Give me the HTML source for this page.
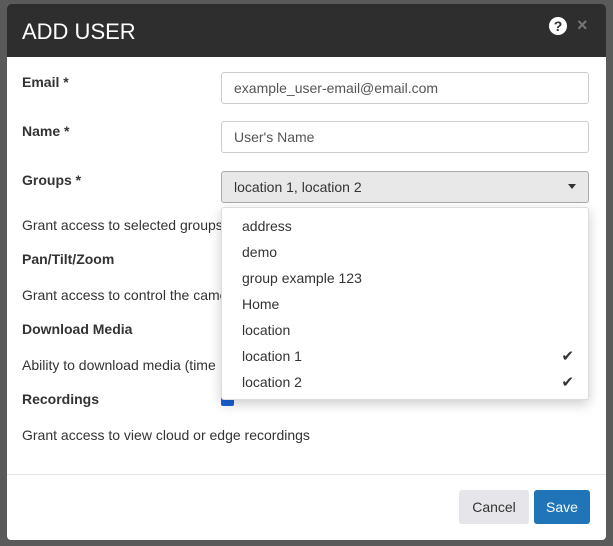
<!DOCTYPE html><html><head><style>
*{box-sizing:border-box;margin:0;padding:0}
body{width:613px;height:546px;background:#5a5a5a;font-family:"Liberation Sans",sans-serif;position:relative;overflow:hidden;color:#333}
.m{position:absolute;left:7px;top:4px;width:599px;height:536px;background:#fff;border-radius:4px;overflow:hidden}
.h{height:53px;background:#2e2e2e;color:#fff;font-size:22px;padding:15px 0 0 15px;font-weight:300}
.a{position:absolute;font-size:14px}
.b{font-weight:bold}
.in{position:absolute;left:214px;width:368px;height:32px;border:1px solid #ccc;border-radius:3px;padding:7px 12px;font-size:14px;color:#555}
.dd{position:absolute;left:214px;top:203px;width:368px;height:193px;background:#fff;border:1px solid #ddd;border-radius:3px;box-shadow:0 4px 12px rgba(0,0,0,.2)}
.it{position:absolute;left:20px;font-size:14px;color:#333}
.ck{position:absolute;right:14px;font-size:15px;color:#333}
</style></head><body>
<div class="m">
<div class="h">ADD USER</div>
<div style="position:absolute;left:542px;top:13px;width:18px;height:18px;border-radius:50%;background:#fff;color:#2e2e2e;font-weight:bold;font-size:14px;text-align:center;line-height:18px">?</div>
<div style="position:absolute;left:570px;top:11px;color:#777;font-size:18px;font-weight:bold">×</div>
<div class="a b" style="left:15px;top:70px">Email *</div>
<div class="in" style="top:68px">example_user-email@email.com</div>
<div class="a b" style="left:15px;top:119px">Name *</div>
<div class="in" style="top:117px">User's Name</div>
<div class="a b" style="left:15px;top:168px">Groups *</div>
<div class="in" style="top:167px;background:#e8e8e8;border-color:#aaa;color:#333">location 1, location 2<span style="position:absolute;right:12px;top:12px;border:4px solid transparent;border-top:5px solid #333"></span></div>
<div class="a" style="left:15px;top:213px">Grant access to selected groups</div>
<div class="a b" style="left:15px;top:247px">Pan/Tilt/Zoom</div>
<div class="a" style="left:15px;top:283px">Grant access to control the camera</div>
<div class="a b" style="left:15px;top:317px">Download Media</div>
<div class="a" style="left:15px;top:353px">Ability to download media (time</div>
<div class="a b" style="left:15px;top:387px">Recordings</div>
<div style="position:absolute;left:214px;top:390px;width:13px;height:12px;background:#1a5fd6;border-radius:2px"></div>
<div class="a" style="left:15px;top:423px">Grant access to view cloud or edge recordings</div>
<div class="dd">
<div class="it" style="top:10px">address</div>
<div class="it" style="top:36px">demo</div>
<div class="it" style="top:62px">group example 123</div>
<div class="it" style="top:88px">Home</div>
<div class="it" style="top:114px">location</div>
<div class="it" style="top:140px">location 1</div><div class="ck" style="top:139px">✔</div>
<div class="it" style="top:166px">location 2</div><div class="ck" style="top:165px">✔</div>
</div>
<div style="position:absolute;left:0;top:470px;width:599px;border-top:1px solid #e5e5e5"></div>
<div style="position:absolute;left:452px;top:486px;width:70px;height:34px;background:#e6e6ea;border-radius:3px;font-size:14px;text-align:center;line-height:34px">Cancel</div>
<div style="position:absolute;left:527px;top:486px;width:56px;height:34px;background:#2074b8;color:#fff;border-radius:3px;font-size:14px;text-align:center;line-height:34px">Save</div>
</div>
</body></html>
